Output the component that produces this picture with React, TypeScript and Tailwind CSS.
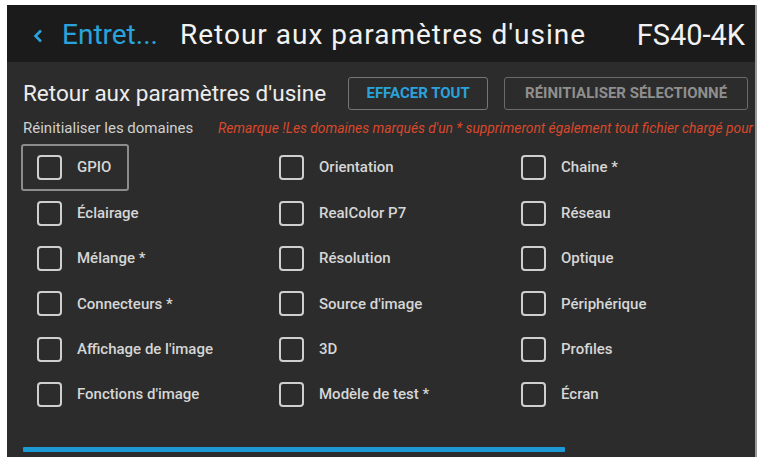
import React from "react";

const items: [string, string, string][] = [
  ["GPIO", "Orientation", "Chaine *"],
  ["Éclairage", "RealColor P7", "Réseau"],
  ["Mélange *", "Résolution", "Optique"],
  ["Connecteurs *", "Source d'image", "Périphérique"],
  ["Affichage de l'image", "3D", "Profiles"],
  ["Fonctions d'image", "Modèle de test *", "Écran"],
];

function Item({ label, focused }: { label: string; focused?: boolean }) {
  return (
    <div className="h-[45.4px] flex items-center">
      <div
        className={
          "h-[47px] flex items-center pl-[14px] pr-[16px] rounded-[3px] " +
          (focused ? "border-2 border-[#8c8c8c] -ml-[2px] pl-[12px]" : "")
        }
      >
        <div className="w-[25px] h-[25px] border-2 border-[#cfcfcf] rounded-[4px] shrink-0" />
        <span className="ml-[15px] text-[15px] text-[#d6d6d6] font-medium whitespace-nowrap">
          {label}
        </span>
      </div>
    </div>
  );
}

export default function App() {
  return (
    <div
      className="w-[762px] h-[457px] bg-white overflow-hidden pt-[5px] pl-[7px]"
      style={{ fontFamily: "Roboto, 'Liberation Sans', sans-serif" }}
    >
      <div className="w-[750px] h-[452px] flex flex-col bg-[#2c2c2c] border-r-[2px] border-[#9a9a9a]">
        {/* Header */}
        <div className="h-[57px] bg-[#1b1b1b] flex items-center pl-[26px] pr-[10px] pt-[3px] shrink-0">
          <svg width="10" height="14" viewBox="0 0 10 14" className="shrink-0 mt-[1px]">
            <polyline
              points="8,1.5 2.5,7 8,12.5"
              fill="none"
              stroke="#2aa3dc"
              strokeWidth="2.6"
            />
          </svg>
          <span className="ml-[19px] text-[28px] text-[#2aa3dc] leading-none whitespace-nowrap">
            Entret...
          </span>
          <span className="ml-[22px] text-[28px] tracking-[1px] text-[#f2f2f2] leading-none whitespace-nowrap flex-1">
            Retour aux paramètres d'usine
          </span>
          <span className="text-[29px] text-[#f2f2f2] leading-none whitespace-nowrap">
            FS40-4K
          </span>
        </div>

        {/* Body */}
        <div className="flex-1 flex flex-col pl-[16px] pt-[15px] overflow-hidden">
          <div className="h-[33px] flex items-center">
            <span className="text-[22.5px] text-[#ececec] whitespace-nowrap leading-none">
              Retour aux paramètres d'usine
            </span>
            <button className="ml-[22px] h-[33px] w-[140px] border-[1.5px] border-[#767676] rounded-[3px] text-[15px] font-bold text-[#2aa3dc]">
              EFFACER TOUT
            </button>
            <button className="ml-[16px] h-[33px] w-[244px] border-[1.5px] border-[#6a6a6a] rounded-[3px] text-[15px] font-bold text-[#8f8f8f]">
              RÉINITIALISER SÉLECTIONNÉ
            </button>
          </div>

          <div className="mt-[9px] h-[18px] flex items-center whitespace-nowrap overflow-hidden">
            <span className="text-[15px] text-[#d0d0d0] w-[195px] shrink-0">
              Réinitialiser les domaines
            </span>
            <span className="text-[13.8px] italic text-[#d9482b]">
              Remarque !Les domaines marqués d'un * supprimeront également tout fichier chargé pour ce projecteur.
            </span>
          </div>

          <div className="mt-[8px] grid grid-cols-[242px_242px_242px]">
            {items.map((row, r) =>
              row.map((label, c) => (
                <Item key={r + "-" + c} label={label} focused={r === 0 && c === 0} />
              ))
            )}
          </div>

          <div className="mt-[30px] w-[542px] h-[5px] bg-[#1b9ad6] rounded-[1px]" />
        </div>
      </div>
    </div>
  );
}
